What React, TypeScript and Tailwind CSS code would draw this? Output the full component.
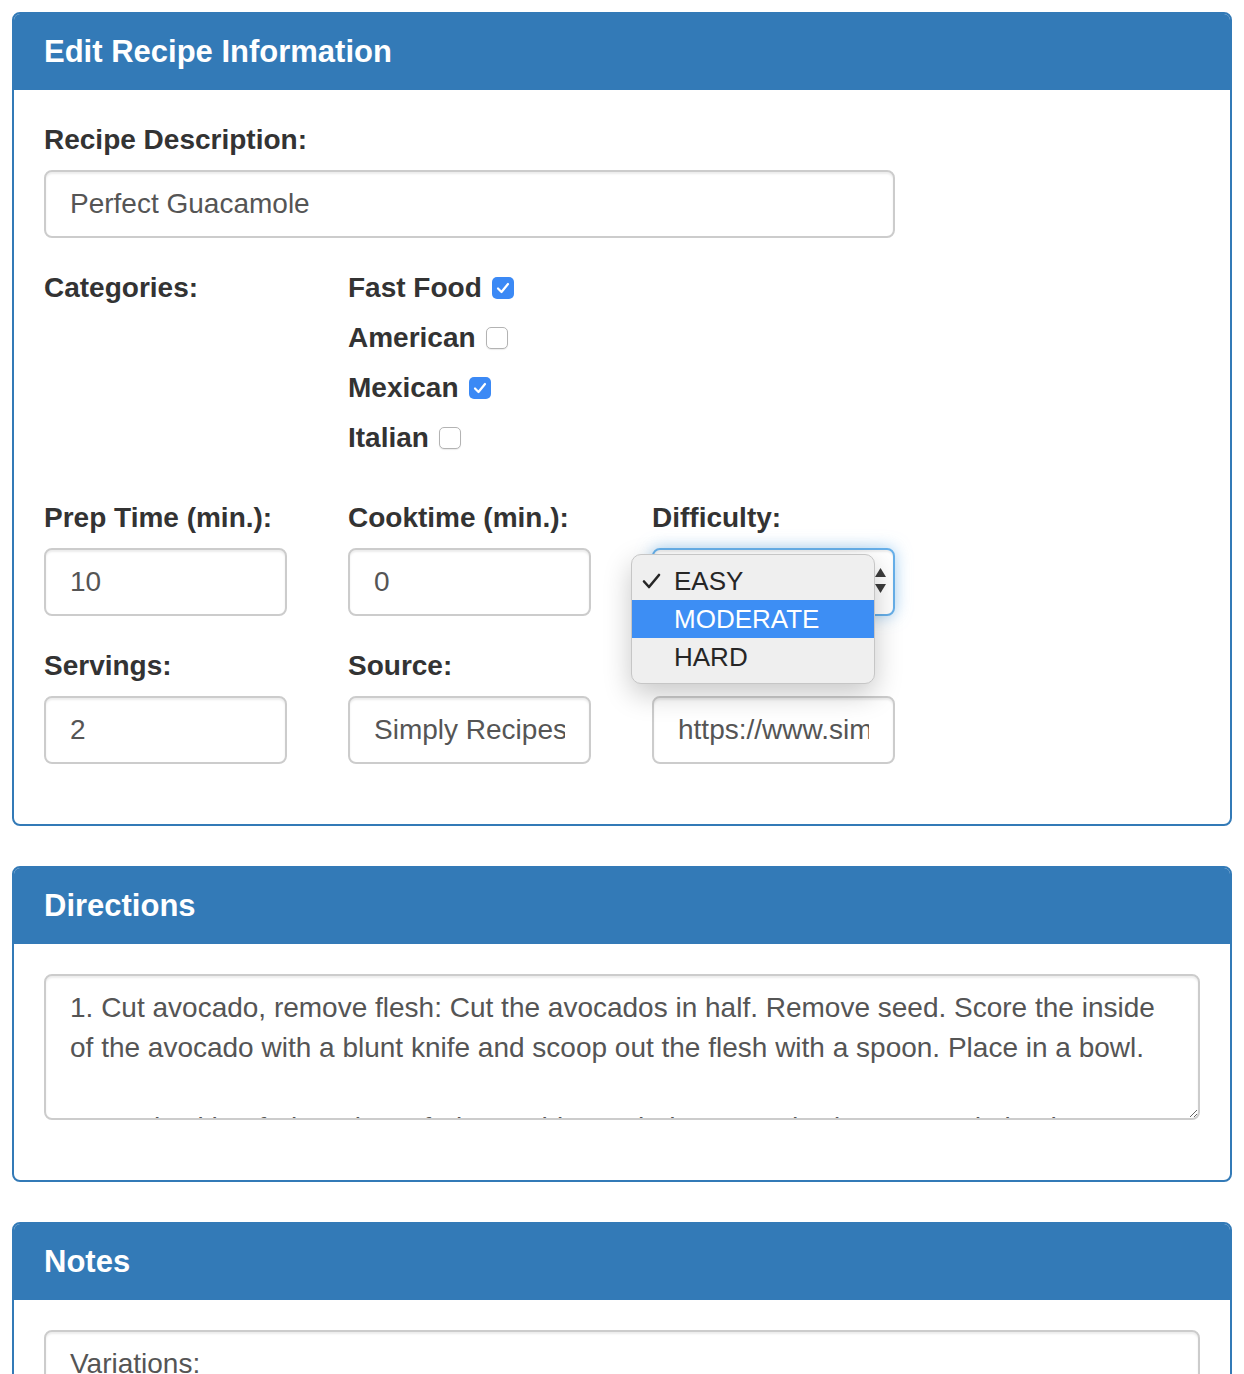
import React from 'react';

const categories = [
  { name: 'Fast Food', checked: true },
  { name: 'American', checked: false },
  { name: 'Mexican', checked: true },
  { name: 'Italian', checked: false },
];

const directions =
  '1. Cut avocado, remove flesh: Cut the avocados in half. Remove seed. Score the inside of the avocado with a blunt knife and scoop out the flesh with a spoon. Place in a bowl.\n\n2. Mash with a fork: Using a fork, roughly mash the avocado. (Don\'t overdo it! The guacamole should be a little chunky.)\n\n3. Add salt, lime juice, and the rest: Sprinkle with salt and lime (or lemon) juice.';

const notes =
  'Variations:\n\nFor a very quick guacamole just take a 1/4 cup of salsa and mix it in with your mashed avocados.\n\nFeel free to experiment! One classic Mexican guacamole has pomegranate seeds and chunks of peaches in it.';

const inputCls =
  'block h-[68px] w-full rounded-[8px] border-2 border-[#cccccc] bg-white px-[24px] text-[28px] text-[#555555] shadow-[inset_0_2px_2px_rgba(0,0,0,0.075)] outline-none';

const labelCls = 'mb-[10px] block h-[40px] text-[28px] font-bold leading-[40px] text-[#333333]';

function Panel({ title, children }: { title: string; children: React.ReactNode }) {
  return (
    <section className="rounded-[8px] border-2 border-[#337ab7] bg-white">
      <div className="flex h-[76px] items-center rounded-t-[6px] bg-[#337ab7] px-[30px]">
        <h3 className="text-[31px] font-bold text-white">{title}</h3>
      </div>
      <div className="px-[30px] pt-[30px] pb-[30px]">{children}</div>
    </section>
  );
}

function Checkbox({ checked }: { checked: boolean }) {
  if (checked) {
    return (
      <span className="flex h-[22px] w-[22px] items-center justify-center rounded-[5px] bg-[#3b89f5]">
        <svg width="14" height="12" viewBox="0 0 14 12" fill="none">
          <path d="M2 6.5 L5.5 10 L12 2" stroke="white" strokeWidth="2.2" strokeLinecap="round" strokeLinejoin="round" />
        </svg>
      </span>
    );
  }
  return <span className="h-[22px] w-[22px] rounded-[5px] border border-[#b3b3b3] bg-white shadow-[0_1px_1px_rgba(0,0,0,0.08)]" />;
}

function DifficultySelect() {
  return (
    <div className="relative">
      <div className="h-[68px] rounded-[8px] border-2 border-[#66afe9] bg-white shadow-[inset_0_2px_2px_rgba(0,0,0,0.075),0_0_16px_rgba(102,175,233,0.6)]" />
      <svg className="absolute right-[9px] top-[20px]" width="11" height="26" viewBox="0 0 11 26">
        <path d="M5.5 0 L11 9 L0 9 Z" fill="#3d3d3d" />
        <path d="M0 16 L11 16 L5.5 25 Z" fill="#3d3d3d" />
      </svg>
      <div className="absolute left-[-21px] top-[6px] z-10 w-[244px] rounded-[10px] border border-[#c6c6c6] bg-[#efefef] py-[7px] shadow-[0_10px_28px_rgba(0,0,0,0.22)]">
        <div className="relative flex h-[38px] items-center pl-[42px] text-[26px] text-[#262626]">
          <svg className="absolute left-[10px] top-[11px]" width="19" height="16" viewBox="0 0 19 16" fill="none">
            <path d="M2 8.5 L7 14 L17 2" stroke="#262626" strokeWidth="2.6" strokeLinecap="round" strokeLinejoin="round" />
          </svg>
          EASY
        </div>
        <div className="flex h-[38px] items-center bg-[#3d8ef4] pl-[42px] text-[26px] text-white">MODERATE</div>
        <div className="flex h-[38px] items-center pl-[42px] text-[26px] text-[#262626]">HARD</div>
      </div>
    </div>
  );
}

export default function App() {
  return (
    <div className="flex min-h-screen flex-col gap-[40px] bg-white p-[12px] font-['Liberation_Sans',Arial,sans-serif]">
      <Panel title="Edit Recipe Information">
        <div className="mb-[30px] w-[851px]">
          <label className={labelCls}>Recipe Description:</label>
          <input readOnly className={inputCls} value="Perfect Guacamole" />
        </div>

        <div className="grid grid-cols-[243px_243px_243px] gap-x-[61px]">
          <div className="mb-[30px]">
            <label className={labelCls}>Categories:</label>
          </div>
          <div className="col-span-2 mb-[30px] flex flex-col">
            {categories.map((c) => (
              <label key={c.name} className="mb-[10px] flex h-[40px] items-center gap-[10px] text-[28px] font-bold text-[#333333]">
                {c.name}
                <Checkbox checked={c.checked} />
              </label>
            ))}
          </div>

          <div className="mb-[30px]">
            <label className={labelCls}>Prep Time (min.):</label>
            <input readOnly className={inputCls} value="10" />
          </div>
          <div className="mb-[30px]">
            <label className={labelCls}>Cooktime (min.):</label>
            <input readOnly className={inputCls} value="0" />
          </div>
          <div className="relative z-10 mb-[30px]">
            <label className={labelCls}>Difficulty:</label>
            <DifficultySelect />
          </div>

          <div className="mb-[30px]">
            <label className={labelCls}>Servings:</label>
            <input readOnly className={inputCls} value="2" />
          </div>
          <div className="mb-[30px]">
            <label className={labelCls}>Source:</label>
            <input readOnly className={inputCls} value="Simply Recipes" />
          </div>
          <div className="mb-[30px]">
            {/* label sits under the open dropdown */}
            <div className="mb-[10px] h-[40px]" />
            <input readOnly className={inputCls} value="https://www.simplyrecipes.com/recipes/perfect_guacamole/" />
          </div>
        </div>
      </Panel>

      <Panel title="Directions">
        <textarea
          readOnly
          rows={3}
          value={directions}
          className="mb-[30px] block h-[146px] w-full resize-y rounded-[8px] border-2 border-[#cccccc] bg-white px-[24px] py-[12px] text-[28px] leading-[40px] text-[#555555] shadow-[inset_0_2px_2px_rgba(0,0,0,0.075)] outline-none"
        />
      </Panel>

      <Panel title="Notes">
        <textarea
          readOnly
          rows={3}
          value={notes}
          className="mb-[30px] block h-[146px] w-full resize-y rounded-[8px] border-2 border-[#cccccc] bg-white px-[24px] py-[12px] text-[28px] leading-[40px] text-[#555555] shadow-[inset_0_2px_2px_rgba(0,0,0,0.075)] outline-none"
        />
      </Panel>
    </div>
  );
}
